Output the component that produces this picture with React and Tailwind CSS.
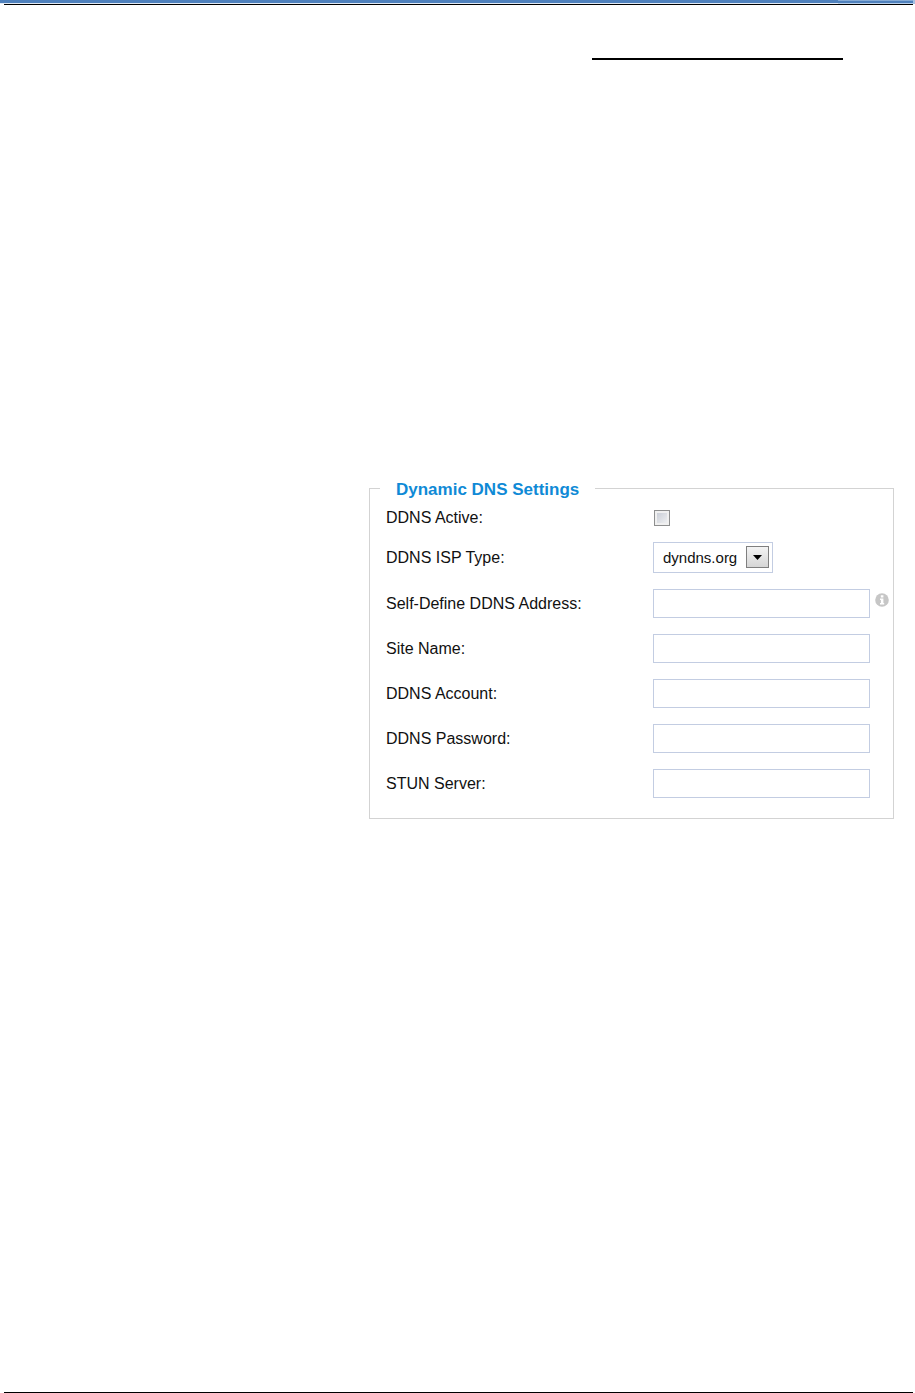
import { useState } from 'react'

const FIELDS = [
  { id: 'address', label: 'Self-Define DDNS Address:', type: 'text', hint: true },
  { id: 'site', label: 'Site Name:', type: 'text' },
  { id: 'account', label: 'DDNS Account:', type: 'text' },
  { id: 'password', label: 'DDNS Password:', type: 'password' },
  { id: 'stun', label: 'STUN Server:', type: 'text' },
]

const ROW = 'grid grid-cols-[267px_1fr] items-center'

function InfoIcon() {
  return (
    <svg viewBox="0 0 14 14" className="mb-2 h-[14px] w-[14px] shrink-0" aria-hidden="true">
      <circle cx="7" cy="7" r="6.8" fill="#c6c6c6" />
      <path d="M5.8 2.2h2.6v2.2H5.8zM5 5.4h3.4v4.7h.8v1.5H5v-1.5h.9V6.9H5z" fill="#fff" />
    </svg>
  )
}

// Blue page rule with a thin black line under it.
function PageHeader() {
  return (
    <header>
      <div className="flex h-1">
        <div className="flex-1 border-b border-[#e3ebf5] bg-[#4f81bd]" />
        <div className="w-[75px] border-t border-b border-t-[#86abd5] border-b-[#b9d0ea] bg-[#4f81bd]" />
        <div className="w-[2px] bg-[#a5c1e2]" />
      </div>
      <div className="mr-[2px] ml-1 h-px bg-black" />
      <div className="mt-[53px] mr-[72px] ml-auto h-[2px] w-[251px] bg-black" />
    </header>
  )
}

export default function App() {
  const [active, setActive] = useState(false)
  const [isp, setIsp] = useState('dyndns.org')
  const [values, setValues] = useState({})

  const update = (id, value) => setValues((v) => ({ ...v, [id]: value }))

  return (
    <div className="flex min-h-screen flex-col bg-white font-['Liberation_Sans',Arial,sans-serif] text-[16px] leading-5 text-[#111]">
      <PageHeader />

      <main className="flex-1 pt-[416px] pr-[21px] pb-10 pl-4">
        <form onSubmit={(e) => e.preventDefault()}>
          <fieldset className="ml-auto w-full max-w-[525px] border border-[#d3d3d3] pr-1 pb-5 pl-4">
            <legend className="-ml-[6px] pt-1 pr-4 pl-4 text-[17px] font-bold text-[#0f8ad6]">
              Dynamic DNS Settings
            </legend>

            <div className="mt-[10px] flex flex-col gap-4">
              <div className={ROW}>
                <label htmlFor="active" className="leading-4">DDNS Active:</label>
                <input
                  id="active"
                  type="checkbox"
                  checked={active}
                  onChange={(e) => setActive(e.target.checked)}
                  className="ml-px h-4 w-4 appearance-none border border-[#8e8f8f] bg-linear-to-br from-[#c3c8d2] to-[#f6f6f6] shadow-[inset_0_0_0_2px_#f0f0f0] checked:from-[#2f6fb5] checked:to-[#5b9be0]"
                />
              </div>

              <div className={ROW}>
                <label htmlFor="isp">DDNS ISP Type:</label>
                <div className="relative w-[120px]">
                  <select
                    id="isp"
                    value={isp}
                    onChange={(e) => setIsp(e.target.value)}
                    className="block h-[31px] w-full appearance-none border border-[#c3cde2] bg-white pr-7 pl-[9px] text-[15px]"
                  >
                    <option>dyndns.org</option>
                  </select>
                  <span className="pointer-events-none absolute top-1 right-1 flex h-[22px] w-[23px] items-center justify-center border border-[#7f7f7f] bg-linear-to-b from-[#f4f4f4] to-[#d6d6d6]">
                    <svg viewBox="0 0 9 5" className="h-[5px] w-[9px]" aria-hidden="true">
                      <path d="M0 0h9L4.5 5z" fill="#000" />
                    </svg>
                  </span>
                </div>
              </div>

              {FIELDS.map((f) => (
                <div key={f.id} className={ROW}>
                  <label htmlFor={f.id}>{f.label}</label>
                  <div className="flex items-center gap-[5px]">
                    <input
                      id={f.id}
                      type={f.type}
                      value={values[f.id] || ''}
                      onChange={(e) => update(f.id, e.target.value)}
                      className="h-[29px] w-[217px] border border-[#c3cde2] bg-white px-2 outline-none focus:border-[#0f8ad6]"
                    />
                    {f.hint && <InfoIcon />}
                  </div>
                </div>
              ))}
            </div>
          </fieldset>
        </form>
      </main>

      <footer className="mr-[2px] ml-1 h-px bg-black" />
    </div>
  )
}
